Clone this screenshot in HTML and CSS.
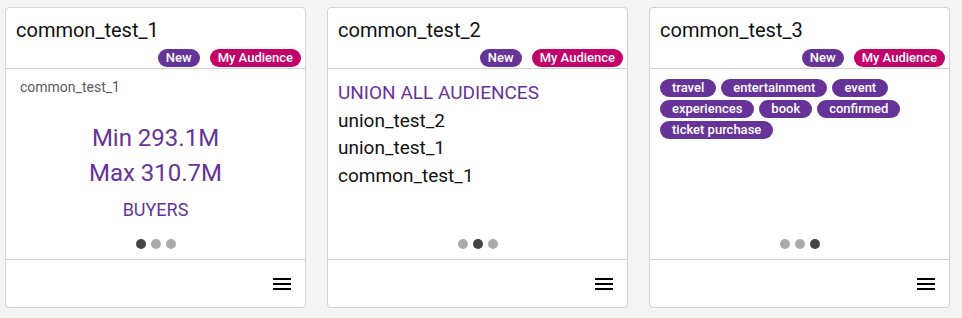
FILE: index.html
```html
<!DOCTYPE html>
<html lang="en">
<head>
    <meta charset="UTF-8">
    <meta name="viewport" content="width=device-width, initial-scale=1.0">
    <title>Audiences</title>
    <link rel="stylesheet" href="styles.css">
</head>
<body>
    <main class="card-list">
        <div class="audience-card">
            <div class="card-header">
                <h2>common_test_1</h2>
                <div class="badges">
                    <span class="badge badge-new">New</span>
                    <span class="badge badge-mine">My Audience</span>
                </div>
            </div>
            <div class="card-body">
                <p class="source-name">common_test_1</p>
                <div class="reach">
                    <p class="reach-value">Min 293.1M</p>
                    <p class="reach-value">Max 310.7M</p>
                    <p class="reach-type">BUYERS</p>
                </div>
                <div class="dots">
                    <span class="dot active"></span><span class="dot"></span><span class="dot"></span>
                </div>
            </div>
            <div class="card-footer">
                <button class="menu-btn" aria-label="Menu">
                    <svg width="18" height="12" viewBox="0 0 18 12"><rect y="0" width="18" height="2"/><rect y="5" width="18" height="2"/><rect y="10" width="18" height="2"/></svg>
                </button>
            </div>
        </div>

        <div class="audience-card">
            <div class="card-header">
                <h2>common_test_2</h2>
                <div class="badges">
                    <span class="badge badge-new">New</span>
                    <span class="badge badge-mine">My Audience</span>
                </div>
            </div>
            <div class="card-body">
                <p class="union-title">UNION ALL AUDIENCES</p>
                <ul class="union-list">
                    <li>union_test_2</li>
                    <li>union_test_1</li>
                    <li>common_test_1</li>
                </ul>
                <div class="dots">
                    <span class="dot"></span><span class="dot active"></span><span class="dot"></span>
                </div>
            </div>
            <div class="card-footer">
                <button class="menu-btn" aria-label="Menu">
                    <svg width="18" height="12" viewBox="0 0 18 12"><rect y="0" width="18" height="2"/><rect y="5" width="18" height="2"/><rect y="10" width="18" height="2"/></svg>
                </button>
            </div>
        </div>

        <div class="audience-card">
            <div class="card-header">
                <h2>common_test_3</h2>
                <div class="badges">
                    <span class="badge badge-new">New</span>
                    <span class="badge badge-mine">My Audience</span>
                </div>
            </div>
            <div class="card-body">
                <div class="tags">
                    <span class="tag">travel</span>
                    <span class="tag">entertainment</span>
                    <span class="tag">event</span>
                    <span class="tag">experiences</span>
                    <span class="tag">book</span>
                    <span class="tag">confirmed</span>
                    <span class="tag">ticket purchase</span>
                </div>
                <div class="dots">
                    <span class="dot"></span><span class="dot"></span><span class="dot active"></span>
                </div>
            </div>
            <div class="card-footer">
                <button class="menu-btn" aria-label="Menu">
                    <svg width="18" height="12" viewBox="0 0 18 12"><rect y="0" width="18" height="2"/><rect y="5" width="18" height="2"/><rect y="10" width="18" height="2"/></svg>
                </button>
            </div>
        </div>
    </main>
</body>
</html>
```

FILE: styles.css
```css
body {
    font-family: Roboto, 'Liberation Sans', sans-serif;
    background: #f4f4f4;
    color: #111;
    margin: 0;
    padding: 7px 5px;
}

p, ul, h2 {
    margin: 0;
    padding: 0;
}

.card-list {
    display: flex;
    gap: 21px;
}

.audience-card {
    box-sizing: border-box;
    width: 301px;
    height: 301px;
    background: #fff;
    border: 1px solid #d2d2d2;
    border-radius: 4px;
    display: flex;
    flex-direction: column;
}

.card-header {
    padding: 10px 4px 1px 10px;
    border-bottom: 1px solid #d2d2d2;
}

.card-header h2 {
    font-size: 20px;
    font-weight: 400;
    line-height: 24px;
}

.badges {
    display: flex;
    justify-content: flex-end;
    gap: 10px;
    margin-top: 7px;
}

.badge {
    height: 18px;
    line-height: 18px;
    padding: 0 8px;
    border-radius: 9px;
    color: #fff;
    font-size: 13px;
    font-weight: 500;
}

.badge-new {
    background: #663399;
}

.badge-mine {
    background: #c4006a;
}

.card-body {
    flex: 1;
    display: flex;
    flex-direction: column;
    padding: 10px 10px;
}

.source-name {
    font-size: 14px;
    color: #5a5a5a;
    margin-left: 4px;
}

.reach {
    text-align: center;
    color: #663399;
    margin-top: 26px;
}

.reach-value {
    font-size: 24px;
    line-height: 35px;
}

.reach-type {
    font-size: 18px;
    line-height: 24px;
    margin-top: 7px;
}

.union-title {
    font-size: 19px;
    line-height: 27.5px;
    color: #663399;
}

.union-list {
    list-style: none;
    font-size: 19px;
    line-height: 27.5px;
}

.tags {
    display: flex;
    flex-wrap: wrap;
    gap: 3px 5px;
}

.tag {
    height: 18px;
    line-height: 18px;
    padding: 0 12px;
    border-radius: 9px;
    background: #663399;
    color: #fff;
    font-size: 13px;
    font-weight: 500;
}

.dots {
    margin-top: auto;
    display: flex;
    justify-content: center;
    gap: 5px;
}

.dot {
    width: 10px;
    height: 10px;
    border-radius: 50%;
    background: #aaa;
}

.dot.active {
    background: #444;
}

.card-footer {
    height: 47px;
    border-top: 1px solid #d2d2d2;
    display: flex;
    align-items: center;
    justify-content: flex-end;
    padding-right: 14px;
}

.menu-btn {
    background: none;
    border: none;
    padding: 0;
    cursor: pointer;
    display: flex;
}

.menu-btn svg {
    fill: #000;
}
```
